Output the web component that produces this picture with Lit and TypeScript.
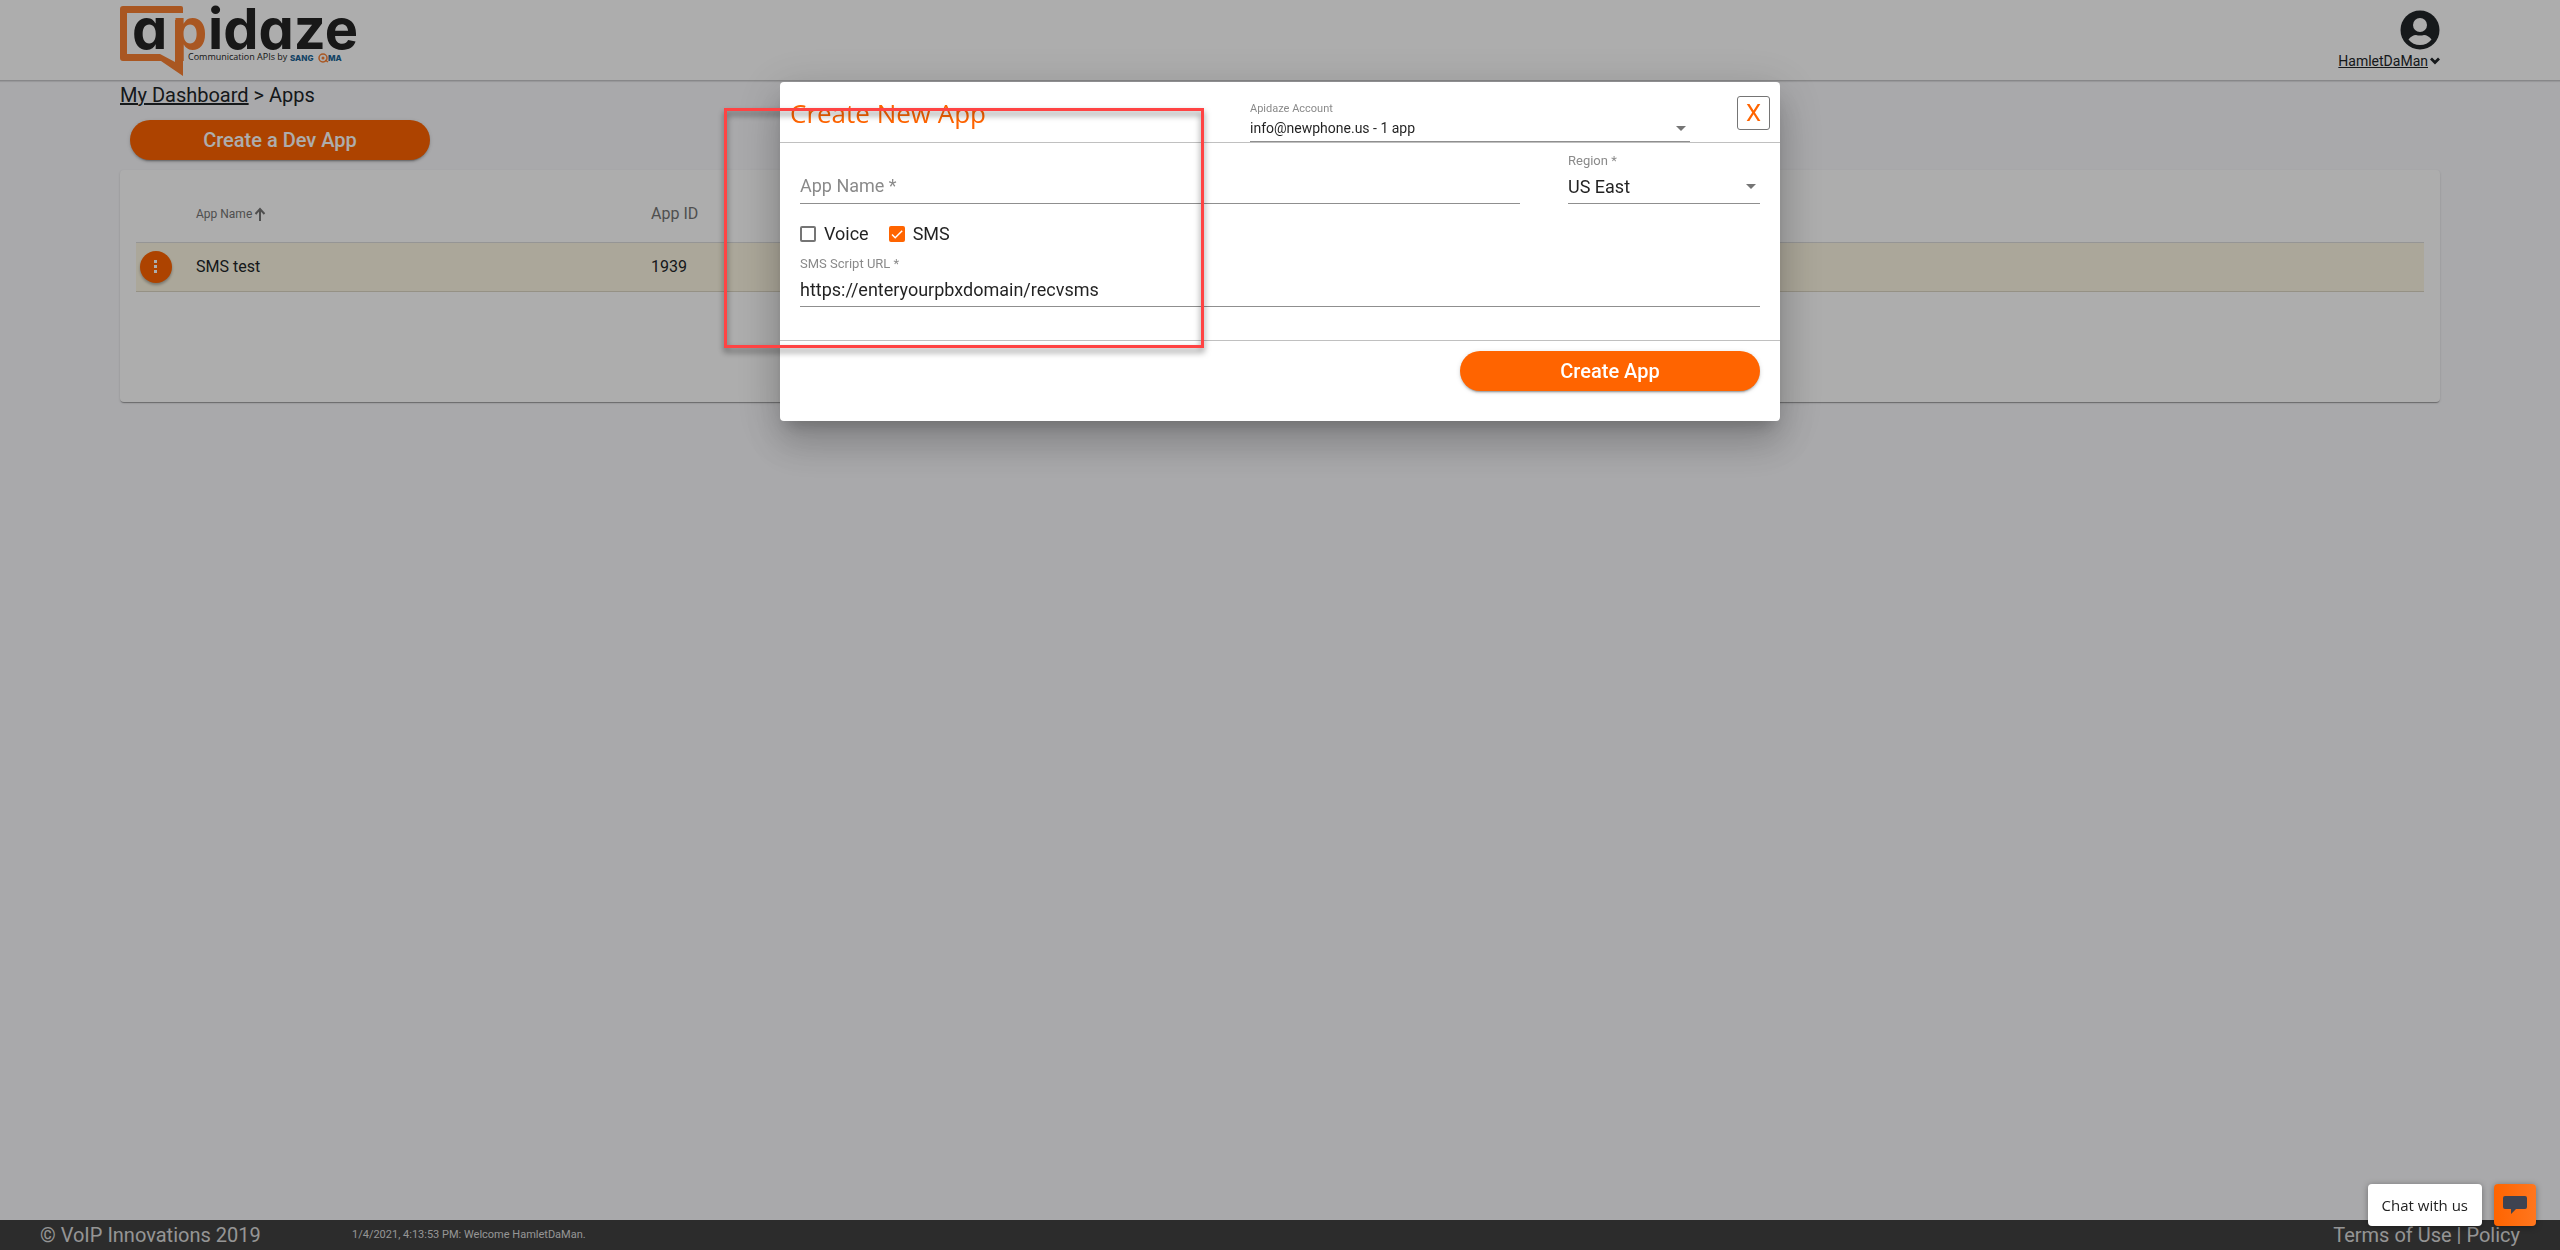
import { LitElement, html, css } from "lit";
import { customElement, state } from "lit/decorators.js";

@customElement("app-logo")
export class AppLogo extends LitElement {
  static styles = css`
    :host {
      display: block;
      line-height: 0;
    }
    .word {
      font: 700 56px Inter, sans-serif;
      font-feature-settings: "cv11";
      fill: #242424;
    }
    .accent {
      fill: #f98133;
    }
    .tag {
      font: 500 9px "Open Sans", sans-serif;
      fill: #242424;
    }
    .brand {
      font: 800 8px Inter, sans-serif;
      fill: #1b6496;
    }
  `;

  render() {
    return html`
      <svg width="240" height="76" viewBox="0 0 240 76" role="img" aria-label="apidaze">
        <path
          class="accent"
          d="M3 6H61Q63 6 63 8V13H7V54H40L55 62V20H63V76L41 61H3Q0 61 0 58V9Q0 6 3 6Z"
        />
        <text class="word" x="12" y="49">a</text>
        <text class="word accent" x="52" y="49">p</text>
        <text class="word" x="88" y="49">idaze</text>
        <text class="tag" x="68" y="60">Communication APIs by</text>
        <text class="brand" x="170" y="61">SANG</text>
        <circle cx="203" cy="58" r="4" fill="none" stroke="#f98133" stroke-width="1.5" />
        <circle cx="203" cy="58" r="1.5" fill="#f98133" />
        <path d="M205 60L208 62" stroke="#f98133" stroke-width="1.5" />
        <text class="brand" x="208" y="61">MA</text>
      </svg>
    `;
  }
}

@customElement("create-app-dialog")
export class CreateAppDialog extends LitElement {
  @state() private voice = false;
  @state() private sms = true;

  static styles = css`
    :host {
      display: block;
      width: 100%;
      max-width: 1000px;
    }
    * {
      box-sizing: border-box;
    }
    .dialog {
      position: relative;
      background: #fff;
      border-radius: 4px;
      color: rgba(0, 0, 0, 0.87);
      box-shadow: 0 11px 15px -7px rgba(0, 0, 0, 0.2), 0 24px 38px 3px rgba(0, 0, 0, 0.14),
        0 9px 46px 8px rgba(0, 0, 0, 0.12);
    }
    .head {
      display: grid;
      grid-template-columns: 460px minmax(0, 440px) 1fr;
      height: 61px;
      padding: 0 10px;
      border-bottom: 1px solid #c0c0c0;
    }
    h2 {
      margin: 0;
      padding-top: 15px;
      font: 400 26px/32px "Open Sans", sans-serif;
      color: #ff6400;
    }
    .account {
      display: flex;
      flex-direction: column;
      justify-content: flex-end;
      border-bottom: 1px solid #8f8f8f;
    }
    .account .label {
      font-size: 11px;
      line-height: 12px;
    }
    .account select {
      font-size: 14px;
      height: 26px;
    }
    .close {
      justify-self: end;
      width: 33px;
      height: 34px;
      margin-top: 14px;
      padding: 0;
      border: 1px solid #757575;
      border-radius: 3px;
      background: #fff;
      color: #ff6400;
      font: 400 24px/30px Roboto, sans-serif;
    }
    .body {
      padding: 0 20px 33px;
      border-bottom: 1px solid #c0c0c0;
    }
    .row {
      display: grid;
      grid-template-columns: minmax(0, 720px) minmax(0, 192px);
      justify-content: space-between;
    }
    .field {
      display: grid;
      grid-template-rows: 16px 24px;
      gap: 5px;
      padding: 10px 0 5px;
      border-bottom: 1px solid #8f8f8f;
    }
    .label {
      font-size: 13px;
      line-height: 16px;
      color: #8a8a8a;
    }
    .field .resting {
      grid-area: 2 / 1;
      font-size: 18px;
      line-height: 24px;
      pointer-events: none;
    }
    .field input {
      grid-area: 2 / 1;
    }
    input.text,
    select {
      width: 100%;
      height: 24px;
      margin: 0;
      padding: 0;
      border: 0;
      outline: 0;
      background: transparent;
      color: inherit;
      font: 400 18px Roboto, sans-serif;
    }
    select {
      appearance: none;
    }
    .pick {
      display: grid;
      align-items: center;
    }
    .pick > * {
      grid-area: 1 / 1;
    }
    .arrow {
      justify-self: end;
      margin-right: 4px;
      border: 5px solid transparent;
      border-top-color: #757575;
      border-bottom: 0;
      pointer-events: none;
    }
    .checks {
      display: flex;
      gap: 20px;
      padding: 18px 0 0;
    }
    .check {
      display: flex;
      align-items: center;
      gap: 8px;
      font-size: 18px;
      line-height: 24px;
    }
    .box {
      display: grid;
    }
    .box > * {
      grid-area: 1 / 1;
    }
    .box input {
      appearance: none;
      width: 16px;
      height: 16px;
      margin: 0;
      border: 2px solid #757575;
      border-radius: 2px;
    }
    .box input:checked {
      border-color: #ff6400;
      background: #ff6400;
    }
    .box svg {
      pointer-events: none;
    }
    .foot {
      display: flex;
      justify-content: flex-end;
      padding: 10px 20px 30px;
    }
    .primary {
      width: 300px;
      height: 40px;
      border: 0;
      border-radius: 20px;
      background: #ff6400;
      color: #fff;
      font: 500 20px Roboto, sans-serif;
      box-shadow: 0 3px 1px -2px rgba(0, 0, 0, 0.2), 0 2px 2px rgba(0, 0, 0, 0.14),
        0 1px 5px rgba(0, 0, 0, 0.12);
    }
    .marker {
      position: absolute;
      left: -56px;
      top: 26px;
      width: 480px;
      height: 240px;
      border: 3px solid #ff4343;
      filter: drop-shadow(0 4px 3px rgba(0, 0, 0, 0.5));
      pointer-events: none;
    }
  `;

  render() {
    return html`
      <section class="dialog" role="dialog" aria-labelledby="title">
        <header class="head">
          <h2 id="title">Create New App</h2>
          <div class="account">
            <label class="label" for="account">Apidaze Account</label>
            <div class="pick">
              <select id="account">
                <option>info@newphone.us - 1 app</option>
              </select>
              <span class="arrow"></span>
            </div>
          </div>
          <button class="close" type="button">X</button>
        </header>
        <div class="body">
          <div class="row">
            <div class="field">
              <label class="label resting" for="name">App Name *</label>
              <input class="text" id="name" type="text" required />
            </div>
            <div class="field">
              <label class="label" for="region">Region *</label>
              <div class="pick">
                <select id="region">
                  <option>US East</option>
                </select>
                <span class="arrow"></span>
              </div>
            </div>
          </div>
          <div class="checks">
            <label class="check">
              <span class="box">
                <input
                  type="checkbox"
                  .checked=${this.voice}
                  @change=${() => (this.voice = !this.voice)}
                />
                ${this.voice ? this.tick() : null}
              </span>
              Voice
            </label>
            <label class="check">
              <span class="box">
                <input
                  type="checkbox"
                  .checked=${this.sms}
                  @change=${() => (this.sms = !this.sms)}
                />
                ${this.sms ? this.tick() : null}
              </span>
              SMS
            </label>
          </div>
          <div class="field">
            <label class="label" for="url">SMS Script URL *</label>
            <input
              class="text"
              id="url"
              type="text"
              required
              value="https://enteryourpbxdomain/recvsms"
            />
          </div>
        </div>
        <footer class="foot">
          <button class="primary" type="button">Create App</button>
        </footer>
        <div class="marker"></div>
      </section>
    `;
  }

  private tick() {
    return html`<svg width="16" height="16" viewBox="0 0 16 16">
      <path d="M3 8.5L6.2 11.7L13.2 4.7" fill="none" stroke="#fff" stroke-width="1.5" />
    </svg>`;
  }
}

@customElement("app-root")
export class AppRoot extends LitElement {
  private apps = [{ name: "SMS test", id: "1939" }];

  static styles = css`
    :host {
      display: flex;
      flex-direction: column;
      min-height: 100vh;
      background: #fafafd;
      color: #212529;
      font-family: Roboto, sans-serif;
    }
    * {
      box-sizing: border-box;
    }
    .top {
      display: flex;
      justify-content: space-between;
      height: 81px;
      padding: 0 120px;
      background: #fff;
      border-bottom: 1px solid #c8c8ca;
      box-shadow: 0 1px 1px rgba(0, 0, 0, 0.1);
    }
    .user {
      display: flex;
      flex-direction: column;
      align-items: flex-end;
      gap: 2px;
      padding-top: 10px;
    }
    .user a {
      display: flex;
      align-items: center;
      gap: 2px;
      font-size: 14px;
      line-height: 18px;
      color: inherit;
    }
    main {
      flex: 1;
      padding: 0 120px;
    }
    .crumbs {
      padding: 1px 0 12px;
      font-size: 20px;
      line-height: 26px;
    }
    .crumbs a {
      color: inherit;
    }
    .primary {
      display: block;
      width: 300px;
      height: 40px;
      margin: 0 10px 10px;
      border: 0;
      border-radius: 20px;
      background: #ff6400;
      color: #fff;
      font: 500 20px Roboto, sans-serif;
      box-shadow: 0 3px 1px -2px rgba(0, 0, 0, 0.2), 0 2px 2px rgba(0, 0, 0, 0.14),
        0 1px 5px rgba(0, 0, 0, 0.12);
    }
    .card {
      padding: 16px 16px 110px;
      background: #fff;
      border-radius: 4px;
      box-shadow: 0 2px 1px -1px rgba(0, 0, 0, 0.2), 0 1px 1px rgba(0, 0, 0, 0.14),
        0 1px 3px rgba(0, 0, 0, 0.12);
    }
    table {
      width: 100%;
      table-layout: fixed;
      border-collapse: collapse;
      font-size: 16px;
    }
    th {
      height: 56px;
      padding: 0;
      font-weight: 400;
      text-align: left;
      color: #757575;
    }
    td {
      height: 49px;
      padding: 0;
      border-top: 1px solid #dcdcdc;
      border-bottom: 1px solid #dcd6c4;
      background: #fdf7e3;
    }
    .actions {
      width: 60px;
    }
    .name {
      width: 455px;
    }
    .sort {
      display: flex;
      align-items: center;
      gap: 2px;
      padding: 0;
      border: 0;
      background: none;
      color: inherit;
      font: 400 12px Roboto, sans-serif;
    }
    .menu {
      display: grid;
      place-items: center;
      width: 32px;
      height: 32px;
      margin-left: 4px;
      padding: 0;
      border: 0;
      border-radius: 50%;
      background: #ff6400;
      box-shadow: 0 2px 3px rgba(0, 0, 0, 0.3);
    }
    .bottom {
      display: flex;
      align-items: center;
      height: 30px;
      padding: 0 40px;
      background: #424242;
      color: #dcdcdc;
      font-size: 20px;
      line-height: 30px;
    }
    .copy {
      width: 312px;
    }
    .status {
      flex: 1;
      font-size: 11px;
    }
    .bottom a {
      color: inherit;
      text-decoration: none;
    }
    .scrim {
      position: fixed;
      inset: 0;
      display: flex;
      justify-content: center;
      align-items: flex-start;
      padding-top: 82px;
      background: rgba(0, 0, 0, 0.32);
    }
    .chat {
      position: fixed;
      right: 24px;
      bottom: 24px;
      display: flex;
      gap: 12px;
    }
    .chat button {
      height: 42px;
      padding: 0 14px;
      border: 0;
      border-radius: 4px;
      background: #fff;
      color: #222;
      font: 400 15px "Open Sans", sans-serif;
      box-shadow: 0 1px 6px rgba(0, 0, 0, 0.35);
    }
    .chat .bubble {
      display: grid;
      place-items: center;
      width: 42px;
      padding: 0;
      background: linear-gradient(90deg, #ff6400, #ff761e);
    }
  `;

  render() {
    return html`
      <header class="top">
        <app-logo></app-logo>
        <div class="user">
          <svg width="40" height="40" viewBox="0 0 40 40" aria-hidden="true">
            <circle cx="20" cy="20" r="19.5" fill="#212529" />
            <circle cx="20" cy="15" r="7" fill="#fff" />
            <path
              d="M8.5 29.5Q12 25 16 25Q20 26 24 25Q28 25 31.5 29.5Q27 35 20 35Q13 35 8.5 29.5Z"
              fill="#fff"
            />
          </svg>
          <a href="#account"
            >HamletDaMan
            <svg width="10" height="8" viewBox="0 0 10 8" aria-hidden="true">
              <path d="M1 1.5L5 5.5L9 1.5" fill="none" stroke="#212529" stroke-width="2.8" />
            </svg>
          </a>
        </div>
      </header>
      <main>
        <nav class="crumbs"><a href="#dashboard">My Dashboard</a> &gt; Apps</nav>
        <button class="primary" type="button">Create a Dev App</button>
        <section class="card">
          <table>
            <thead>
              <tr>
                <th class="actions"></th>
                <th class="name">
                  <button class="sort" type="button">
                    App Name
                    <svg width="12" height="14" viewBox="0 0 12 14" aria-hidden="true">
                      <path
                        d="M6 14V2M1.5 7L6 2L10.5 7"
                        fill="none"
                        stroke="#757575"
                        stroke-width="2"
                      />
                    </svg>
                  </button>
                </th>
                <th>App ID</th>
              </tr>
            </thead>
            <tbody>
              ${this.apps.map(
                (app) => html`
                  <tr>
                    <td>
                      <button class="menu" type="button" aria-label="Actions">
                        <svg width="4" height="14" viewBox="0 0 4 14" fill="#fff">
                          <rect x="0" y="0" width="3" height="3" />
                          <rect x="0" y="5" width="3" height="3" />
                          <rect x="0" y="10" width="3" height="3" />
                        </svg>
                      </button>
                    </td>
                    <td>${app.name}</td>
                    <td>${app.id}</td>
                  </tr>
                `
              )}
            </tbody>
          </table>
        </section>
      </main>
      <footer class="bottom">
        <span class="copy">© VoIP Innovations 2019</span>
        <span class="status">1/4/2021, 4:13:53 PM: Welcome HamletDaMan.</span>
        <span><a href="#terms">Terms of Use</a> | <a href="#policy">Policy</a></span>
      </footer>
      <div class="scrim"><create-app-dialog></create-app-dialog></div>
      <div class="chat">
        <button type="button">Chat with us</button>
        <button class="bubble" type="button" aria-label="Open chat">
          <svg width="24" height="20" viewBox="0 0 24 20">
            <path
              d="M2 1H22Q24 1 24 3V12Q24 14 22 14H13L8 19V14H2Q0 14 0 12V3Q0 1 2 1Z"
              fill="#3e4351"
            />
          </svg>
        </button>
      </div>
    `;
  }
}
